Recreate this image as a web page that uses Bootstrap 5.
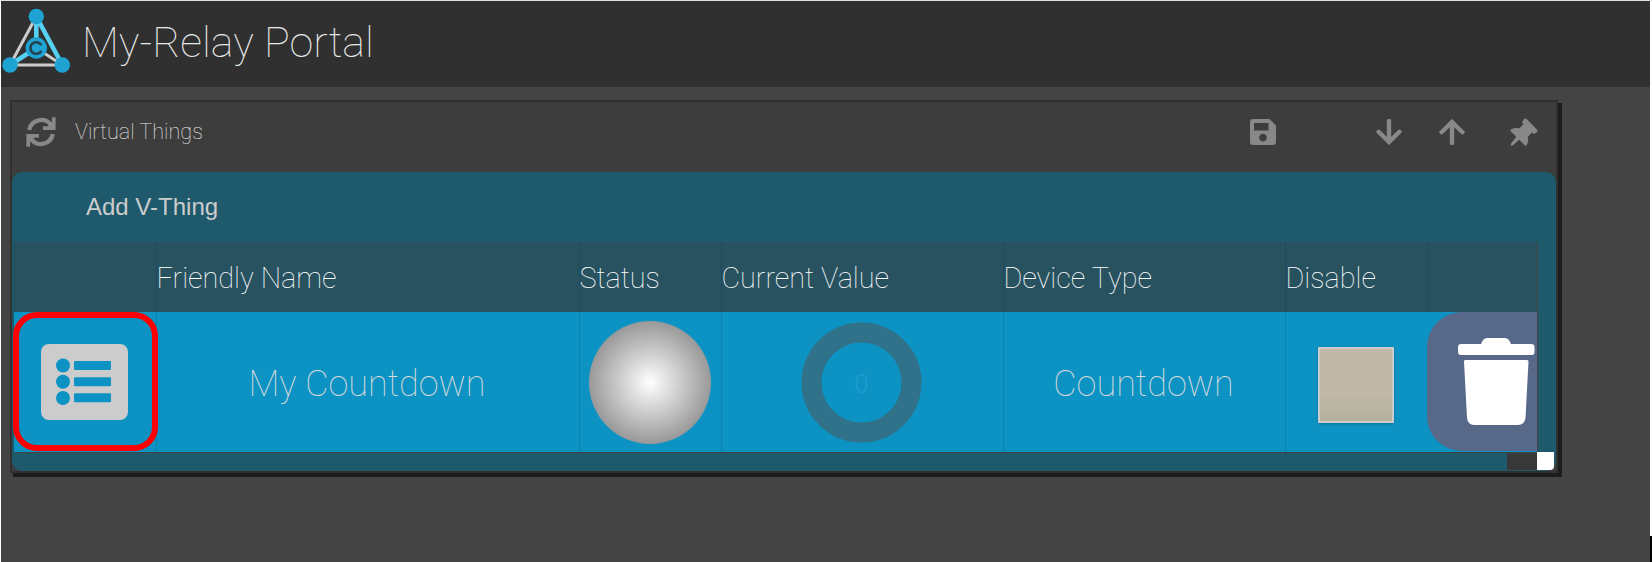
<!DOCTYPE html>
<html lang="en">
<head>
<meta charset="utf-8">
<meta name="viewport" content="width=device-width, initial-scale=1">
<title>My-Relay Portal</title>
<link href="https://cdn.jsdelivr.net/npm/bootstrap@5.3.0/dist/css/bootstrap.min.css" rel="stylesheet">
<style>
html,body{height:100%}
body{background:#444;font-family:Roboto,"Liberation Sans",sans-serif;color:#ccc;overflow:hidden;border-left:1px solid #fff;border-top:1px solid #dde4e4}
.edge{width:2px;background:linear-gradient(#fff 535px,#000 535px)}
.topbar{height:86px;background:#303030}
.topbar h1{font-size:43px;font-weight:100;line-height:1;color:#e8e8e8;margin:-3px 0 0 11px}
.logo{margin-top:-7px}
.panel{width:1548px;height:373px;margin:13px 0 0 9px;border:2px solid #303030;background:#3d3d3d;box-shadow:3.5px 3.5px 0 .5px #1c1c1c}
.tools{height:70px;padding:0 18px 10px 14px;color:#888}
.tools svg{fill:currentColor;flex:none;display:block}
.tools .name{font-size:21.6px;font-weight:100;color:#e8e8e8;margin:1px 0 0 19px}
.save-icon{margin-right:100px}
.down-icon{margin-right:37px}
.up-icon{margin-right:45px}
.sheet{height:299px;background:#1f596c;border-radius:10px;padding:0 0 0 2px}
.add{height:70px;font:24px/70px "Liberation Sans",sans-serif;color:#ccc;padding-left:72px}
.gridrow{display:grid;grid-template-columns:142px 423px 142px 282px 282px 142px 110px;width:1524px}
.gridrow>div{border-left:1px solid #22495a}
.heads{height:70px;background:#28525f;font-size:28.8px;font-weight:100;color:#fff;border-right:1px solid #444}
.heads>div{line-height:73px;height:70px;text-indent:-.6px}
.item{height:141px;background:#0d93c3;border-bottom:1px solid #444;border-right:1px solid #444}
.item>div{border-left-color:#0b82ac;display:flex;align-items:center;justify-content:center;font-size:36px;font-weight:100}
.item>.label-cell{padding:4px 2px 0 0;color:#dadada}
.item>.edit{position:relative;border-left:0;padding-right:2px}
.ring{position:absolute;left:-1px;top:0;width:145px;height:139px;border:6px solid #f00;border-radius:24px;z-index:2}
.ball{width:122px;height:123px;border-radius:50%;background:radial-gradient(circle at center,#fff,#999 61px);margin-left:-2px}
.dial{margin-left:-1px}
.tick{width:76px;height:76px;border:2px solid #ccc;background:linear-gradient(#c0b8a8 60%,#b4b09c);box-shadow:0 1px 3px #0003;margin:6px 0 0 -1px}
.item>.del{border:0;background:#586888;border-radius:35px 0 0 35px;height:139px;justify-content:flex-end;padding:2px 2px 0 0}
.foot{height:17px;width:1540px}
.foot i{display:block;width:30px;background:#383838}
.foot b{display:block;width:17px;background:#fff;border-bottom-right-radius:4px;margin-top:-1px}
</style>
</head>
<body class="d-flex">
<div class="flex-grow-1">
<header class="topbar d-flex align-items-center">
<svg class="logo" width="70" height="72" viewBox="1 5 70 72"><g stroke-width="3" stroke="#ccc" fill="none"><path d="M36.3 16.5 10 65H62.3L36.3 48"/></g><g stroke="#55d0f0" stroke-width="4.6" fill="none"><path d="M36.3 16.5V48L10 65M36.3 16.5 62.3 65"/></g><g fill="#1ea3d3"><circle cx="36.3" cy="16.5" r="7.7"/><circle cx="10" cy="65" r="7.7"/><circle cx="62.3" cy="65" r="7.7"/><circle cx="36.3" cy="48" r="10.7"/></g><path d="M41.3 45.2A5.8 5.8 0 1 0 41.3 50.8" fill="none" stroke="#253f4c" stroke-width="2.6"/></svg>
<h1>My-Relay Portal</h1>
</header>
<main class="panel">
<div class="tools d-flex align-items-center">
<svg width="30" height="30" viewBox="0 0 30 30"><g id="half"><path d="M3.2 13A12.2 12.2 0 0 1 25 8" fill="none" stroke="currentColor" stroke-width="4.2"/><path d="M26 .2H29.6V13H17V9.2H21.7L26 4.8Z"/></g><use href="#half" transform="rotate(180 15 15)"/></svg>
<span class="name">Virtual Things</span>
<svg class="save-icon ms-auto" width="26" height="26" viewBox="0 0 26 26"><path fill-rule="evenodd" d="M3 0H19.5L26 6.5V23a3 3 0 0 1-3 3H3a3 3 0 0 1-3-3V3a3 3 0 0 1 3-3ZM4 4V11.5H18.5V4ZM13 14.8a3.8 3.8 0 1 0 .01 0Z"/></svg>
<svg class="down-icon" width="26" height="26" viewBox="0 0 26 26"><g id="arrow" fill="none" stroke="currentColor" stroke-width="4.4" stroke-linecap="round"><path d="M13 2V22M2.6 12.800 13 23 23.400 12.800"/></g></svg>
<svg class="up-icon" width="26" height="26" viewBox="0 0 26 26"><use href="#arrow" transform="rotate(180 13 13)"/></svg>
<svg width="28" height="28" viewBox="0 0 28 28"><path d="M16.1.5 27.5 12Q28 13.5 26 14.8L24 16 22 14.6 17.8 18.8Q19 23.5 16.4 27.4 15.5 28 14.6 27.3L9.3 21.8 3 27.2 1 27.8.6 26.8 1 25.4 6.3 18.8.8 13.4Q0 12.3 1 11.4 4.8 9.2 9.4 10.3L13.5 6.2 12 4.4 13.6 1.6Q15 0 16.1.5Z"/></svg>
</div>
<section class="sheet">
<div class="add">Add V-Thing</div>
<div class="gridrow heads"><div></div><div>Friendly Name</div><div>Status</div><div>Current Value</div><div>Device Type</div><div>Disable</div><div></div></div>
<div class="gridrow item">
<div class="edit"><svg width="87" height="76" viewBox="0 0 87 76"><rect width="87" height="76" rx="8" fill="#ccc"/><g fill="#0d93c3"><circle cx="22" cy="21.5" r="7"/><circle cx="22" cy="37.7" r="7"/><circle cx="22" cy="54" r="7"/><rect x="33" y="17" width="37" height="9" rx="1"/><rect x="33" y="33.2" width="37" height="9" rx="1"/><rect x="33" y="49.3" width="37" height="9" rx="1"/></g></svg><div class="ring"></div></div>
<div class="label-cell">My Countdown</div>
<div><span class="ball"></span></div>
<div><svg class="dial" width="122" height="122" viewBox="0 0 122 122"><circle cx="60.5" cy="61.5" r="50" fill="none" stroke="#30728a" stroke-width="20"/><text x="60.5" y="71.500" text-anchor="middle" font-size="25" font-weight="300" fill="#1c9fd2">0</text></svg></div>
<div class="label-cell">Countdown</div>
<div><span class="tick"></span></div>
<div class="del"><svg width="77" height="90" viewBox="0 0 77 90" fill="#fff"><path d="M2 6H23Q25 0 29 0H47Q51 0 53 6H73Q76.5 6 76.5 9V14Q76.5 17 74 17H3Q0 17 0 14V9Q0 6 3 6ZM7 22H69Q70.5 22 70.5 23.5L67.5 80Q66.500 87 60 87H16Q10 87 9 80L6 23.500Q6 22 7 22Z"/></svg></div>
</div>
<div class="foot d-flex justify-content-end"><i></i><b></b></div>
</section>
</main>
</div>
<div class="edge"></div>
<script src="https://cdn.jsdelivr.net/npm/bootstrap@5.3.0/dist/js/bootstrap.bundle.min.js"></script>
</body>
</html>
